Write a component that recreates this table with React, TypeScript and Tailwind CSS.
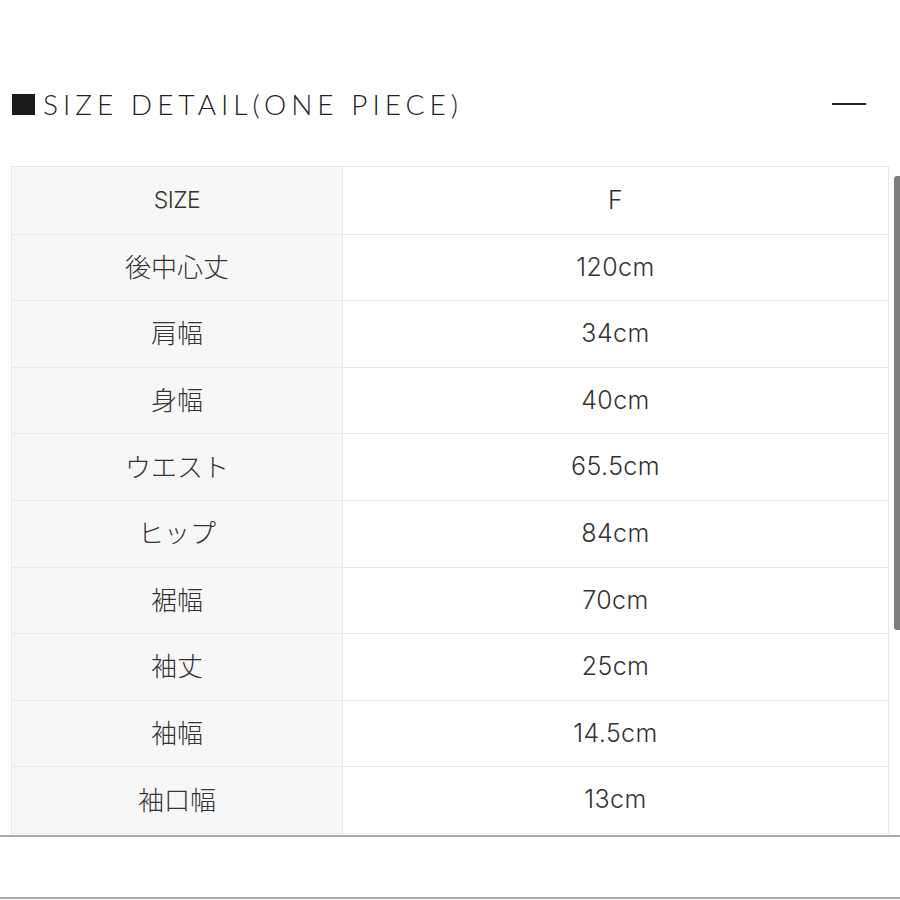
import React from "react";

const rows: [string, string][] = [
  ["SIZE", "F"],
  ["後中心丈", "120cm"],
  ["肩幅", "34cm"],
  ["身幅", "40cm"],
  ["ウエスト", "65.5cm"],
  ["ヒップ", "84cm"],
  ["裾幅", "70cm"],
  ["袖丈", "25cm"],
  ["袖幅", "14.5cm"],
  ["袖口幅", "13cm"],
];

export default function App() {
  return (
    <div
      className="relative w-[900px] h-[900px] bg-white overflow-hidden text-[#333]"
      style={{ fontFamily: '"Inter", "Noto Sans CJK JP", sans-serif' }}
    >
      <div className="h-[72px]" />
      <div className="flex items-center justify-between h-[64px] pl-[12px] pr-[34px]">
        <div className="flex items-center">
          <div className="w-[23px] h-[21px] bg-[#1a1a1a]" />
          <span
            className="ml-[8px] text-[28px] tracking-[5px] text-[#222] leading-none font-light"
            style={{ fontFamily: '"Lato", sans-serif' }}
          >
            SIZE DETAIL(ONE PIECE)
          </span>
        </div>
        <div className="w-[34px] h-[2px] bg-[#222]" />
      </div>
      <div className="h-[30px]" />
      <div className="ml-[11px] w-[878px] border border-[#e6e6e6]">
        {rows.map(([k, v], i) => (
          <div
            key={i}
            className={`flex h-[66.6px] ${i > 0 ? "border-t border-[#e8e8e8]" : ""}`}
          >
            <div className="w-[331px] bg-[#f7f7f7] border-r border-[#e8e8e8] flex items-center justify-center text-[26px] font-light">
              {k === "SIZE" ? <span className="text-[23px] tracking-[-0.5px]">{k}</span> : k}
            </div>
            <div className="flex-1 flex items-center justify-center text-[25px] tracking-[0.4px] font-light">
              {v}
            </div>
          </div>
        ))}
      </div>
      <div className="absolute left-0 right-0 top-[835px] h-[2px] bg-[#a8a8a8]" />
      <div className="absolute left-0 right-0 top-[897px] h-[2px] bg-[#a8a8a8]" />
      <div className="absolute right-0 top-[176px] w-[6px] h-[454px] rounded-l-[3px] bg-[#7d7d7d]" />
    </div>
  );
}
